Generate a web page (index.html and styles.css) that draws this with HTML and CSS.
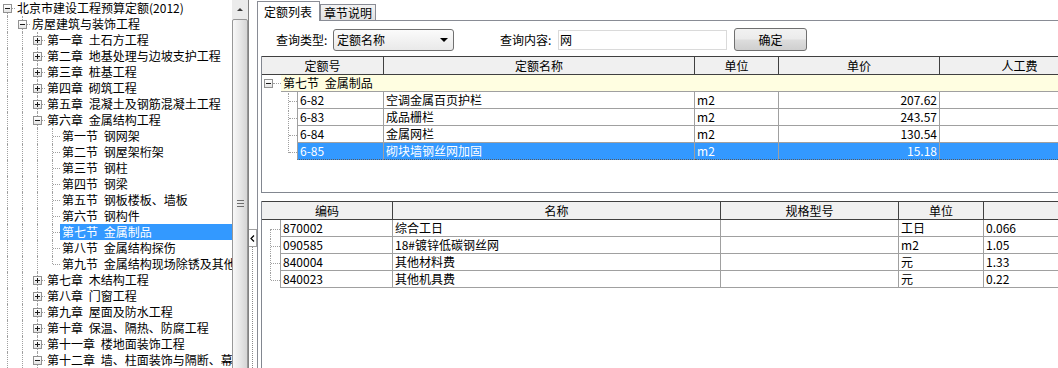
FILE: index.html
```html
<!DOCTYPE html>
<html lang="zh-CN">
<head>
    <meta charset="UTF-8">
    <title>定额查询</title>
    <link rel="stylesheet" href="styles.css">
</head>
<body>
<div class="app">
    <div class="tree-pane">
        <ul class="tree">
            <li class="node"><span class="g r"><i class="box minus"></i></span><span class="label">北京市建设工程预算定额(2012)</span></li>
            <li class="node"><span class="g v"></span><span class="g t"><i class="box minus"></i></span><span class="label">房屋建筑与装饰工程</span></li>
            <li class="node"><span class="g v"></span><span class="g v"></span><span class="g t"><i class="box plus"></i></span><span class="label">第一章 土石方工程</span></li>
            <li class="node"><span class="g v"></span><span class="g v"></span><span class="g t"><i class="box plus"></i></span><span class="label">第二章 地基处理与边坡支护工程</span></li>
            <li class="node"><span class="g v"></span><span class="g v"></span><span class="g t"><i class="box plus"></i></span><span class="label">第三章 桩基工程</span></li>
            <li class="node"><span class="g v"></span><span class="g v"></span><span class="g t"><i class="box plus"></i></span><span class="label">第四章 砌筑工程</span></li>
            <li class="node"><span class="g v"></span><span class="g v"></span><span class="g t"><i class="box plus"></i></span><span class="label">第五章 混凝土及钢筋混凝土工程</span></li>
            <li class="node"><span class="g v"></span><span class="g v"></span><span class="g t"><i class="box minus"></i></span><span class="label">第六章 金属结构工程</span></li>
            <li class="node"><span class="g v"></span><span class="g v"></span><span class="g v"></span><span class="g t"></span><span class="label">第一节 钢网架</span></li>
            <li class="node"><span class="g v"></span><span class="g v"></span><span class="g v"></span><span class="g t"></span><span class="label">第二节 钢屋架桁架</span></li>
            <li class="node"><span class="g v"></span><span class="g v"></span><span class="g v"></span><span class="g t"></span><span class="label">第三节 钢柱</span></li>
            <li class="node"><span class="g v"></span><span class="g v"></span><span class="g v"></span><span class="g t"></span><span class="label">第四节 钢梁</span></li>
            <li class="node"><span class="g v"></span><span class="g v"></span><span class="g v"></span><span class="g t"></span><span class="label">第五节 钢板楼板、墙板</span></li>
            <li class="node"><span class="g v"></span><span class="g v"></span><span class="g v"></span><span class="g t"></span><span class="label">第六节 钢构件</span></li>
            <li class="node selected"><span class="g v"></span><span class="g v"></span><span class="g v"></span><span class="g t"></span><span class="label">第七节 金属制品</span></li>
            <li class="node"><span class="g v"></span><span class="g v"></span><span class="g v"></span><span class="g t"></span><span class="label">第八节 金属结构探伤</span></li>
            <li class="node"><span class="g v"></span><span class="g v"></span><span class="g v"></span><span class="g l"></span><span class="label">第九节 金属结构现场除锈及其他</span></li>
            <li class="node"><span class="g v"></span><span class="g v"></span><span class="g t"><i class="box plus"></i></span><span class="label">第七章 木结构工程</span></li>
            <li class="node"><span class="g v"></span><span class="g v"></span><span class="g t"><i class="box plus"></i></span><span class="label">第八章 门窗工程</span></li>
            <li class="node"><span class="g v"></span><span class="g v"></span><span class="g t"><i class="box plus"></i></span><span class="label">第九章 屋面及防水工程</span></li>
            <li class="node"><span class="g v"></span><span class="g v"></span><span class="g t"><i class="box plus"></i></span><span class="label">第十章 保温、隔热、防腐工程</span></li>
            <li class="node"><span class="g v"></span><span class="g v"></span><span class="g t"><i class="box plus"></i></span><span class="label">第十一章 楼地面装饰工程</span></li>
            <li class="node"><span class="g v"></span><span class="g v"></span><span class="g t"><i class="box minus"></i></span><span class="label">第十二章 墙、柱面装饰与隔断、幕墙工程</span></li>
        </ul>
        <div class="vscroll">
            <div class="vscroll-up"></div>
            <div class="vscroll-thumb"><span class="grip"></span></div>
        </div>
    </div>

    <div class="splitter">
        <div class="splitter-btn">
            <svg width="5" height="7" viewBox="0 0 5 7"><path d="M4 0.5 L1 3.5 L4 6.5" stroke="#000" stroke-width="1.2" fill="none"/></svg>
        </div>
        <div class="splitter-dots"></div>
    </div>

    <div class="main">
        <div class="tabs">
            <div class="tab active">定额列表</div>
            <div class="tab">章节说明</div>
        </div>
        <div class="tab-body">
            <div class="query">
                <span class="q-label">查询类型:</span>
                <div class="combo"><span>定额名称</span><span class="combo-arrow"></span></div>
                <span class="q-label second">查询内容:</span>
                <div class="q-input">网</div>
                <div class="q-btn">确定</div>
            </div>

            <div class="grid grid-top">
                <table class="dg dg-top">
                    <colgroup>
                        <col class="c-g1"><col class="c-g2"><col class="c-code"><col class="c-name"><col class="c-unit"><col class="c-price"><col class="c-labor">
                    </colgroup>
                    <thead>
                        <tr><th colspan="3" class="first">定额号</th><th>定额名称</th><th>单位</th><th>单价</th><th>人工费</th></tr>
                    </thead>
                    <tbody>
                        <tr class="group">
                            <td class="gut"><span class="tl grp"><i class="box minus"></i></span></td>
                            <td colspan="6" class="group-cell">第七节 金属制品</td>
                        </tr>
                        <tr>
                            <td colspan="2" class="gut"><span class="tl t"></span></td>
                            <td class="code">6-82</td><td>空调金属百页护栏</td><td>m2</td><td class="num">207.62</td><td></td>
                        </tr>
                        <tr>
                            <td colspan="2" class="gut"><span class="tl t"></span></td>
                            <td class="code">6-83</td><td>成品栅栏</td><td>m2</td><td class="num">243.57</td><td></td>
                        </tr>
                        <tr>
                            <td colspan="2" class="gut"><span class="tl t"></span></td>
                            <td class="code">6-84</td><td>金属网栏</td><td>m2</td><td class="num">130.54</td><td></td>
                        </tr>
                        <tr class="sel">
                            <td colspan="2" class="gut"><span class="tl l"></span></td>
                            <td class="code">6-85</td><td>砌块墙钢丝网加固</td><td>m2</td><td class="num">15.18</td><td></td>
                        </tr>
                    </tbody>
                </table>
            </div>

            <div class="grid grid-bottom">
                <table class="dg dg-bottom">
                    <colgroup>
                        <col class="c-g"><col class="c-bcode"><col class="c-bname"><col class="c-spec"><col class="c-bunit"><col class="c-qty">
                    </colgroup>
                    <thead>
                        <tr><th colspan="2" class="first">编码</th><th>名称</th><th>规格型号</th><th>单位</th><th></th></tr>
                    </thead>
                    <tbody>
                        <tr><td class="gut"><span class="tl f"></span></td><td class="code">870002</td><td>综合工日</td><td></td><td>工日</td><td>0.066</td></tr>
                        <tr><td class="gut"><span class="tl t"></span></td><td class="code">090585</td><td>18#镀锌低碳钢丝网</td><td></td><td>m2</td><td>1.05</td></tr>
                        <tr><td class="gut"><span class="tl t"></span></td><td class="code">840004</td><td>其他材料费</td><td></td><td>元</td><td>1.33</td></tr>
                        <tr><td class="gut"><span class="tl l"></span></td><td class="code">840023</td><td>其他机具费</td><td></td><td>元</td><td>0.22</td></tr>
                    </tbody>
                </table>
            </div>
        </div>
    </div>
</div>
</body>
</html>
```

FILE: styles.css
```css
:root {
    --line: #a0a0a0;
    --dots: #a0a0a0;
    --frame: #828790;
    --head-line: #404040;
    --select: #3399ff;
    --tab-line: #898c95;
}

* {
    margin: 0;
    padding: 0;
    box-sizing: border-box;
}

body {
    font-family: "Noto Sans CJK SC", "Liberation Sans", sans-serif;
    font-size: 12px;
    color: #000;
    background: #fff;
    overflow: hidden;
}

.app {
    display: flex;
    width: 1058px;
    height: 368px;
}

/* Left tree */
.tree-pane {
    display: flex;
    width: 249px;
    flex-shrink: 0;
    border-right: 1px solid #828282;
}

.tree {
    list-style: none;
    width: 232px;
    overflow: hidden;
}

.node {
    display: flex;
    height: 16px;
    line-height: 16px;
    white-space: nowrap;
}

.g {
    position: relative;
    width: 15px;
    height: 16px;
    flex-shrink: 0;
}

.g::before,
.g::after,
.tl::before,
.tl::after {
    content: "";
    position: absolute;
}

.g.v::before,
.g.t::before {
    left: 7px;
    top: 0;
    bottom: 0;
    border-left: 1px dotted var(--dots);
}

.g.l::before {
    left: 7px;
    top: 0;
    height: 8px;
    border-left: 1px dotted var(--dots);
}

.g.r::before {
    left: 7px;
    top: 8px;
    bottom: 0;
    border-left: 1px dotted var(--dots);
}

.g.t::after,
.g.l::after,
.g.r::after {
    left: 8px;
    right: 0;
    top: 8px;
    border-top: 1px dotted var(--dots);
}

.box {
    position: absolute;
    left: 3px;
    top: 4px;
    width: 9px;
    height: 9px;
    border: 1px solid #919191;
    background: linear-gradient(#ffffff, #e4e4e4);
    z-index: 1;
}

.box::before {
    content: "";
    position: absolute;
    left: 1px;
    top: 3px;
    width: 5px;
    height: 1px;
    background: #1a1a1a;
}

.box.plus::after {
    content: "";
    position: absolute;
    left: 3px;
    top: 1px;
    width: 1px;
    height: 5px;
    background: #1a1a1a;
}

.label {
    padding: 0 2px;
    word-spacing: 3px;
}

.node.selected .label {
    flex: 1;
    background: var(--select);
    color: #fff;
}

/* Scrollbar */
.vscroll {
    width: 16px;
    flex-shrink: 0;
    background: #ebebeb;
    display: flex;
    flex-direction: column;
    overflow: hidden;
}

.vscroll-up {
    height: 18px;
    flex-shrink: 0;
    display: flex;
    justify-content: center;
    align-items: center;
}

.vscroll-up::before {
    content: "";
    border-left: 3px solid transparent;
    border-right: 3px solid transparent;
    border-bottom: 3px solid #3c3c3c;
}

.vscroll-thumb {
    height: 370px;
    flex-shrink: 0;
    margin-top: 1px;
    border: 1px solid #979797;
    border-radius: 2px;
    background: linear-gradient(90deg, #f8f8f8, #e6e6e6 55%, #d5d5d5);
    display: flex;
    justify-content: center;
    align-items: center;
}

.grip {
    width: 7px;
    height: 8px;
    background: repeating-linear-gradient(#6e6e6e 0 1px, transparent 1px 3px);
}

/* Splitter */
.splitter {
    width: 8px;
    flex-shrink: 0;
    display: flex;
    flex-direction: column;
}

.splitter-btn {
    margin-top: 229px;
    height: 18px;
    border: 1px solid var(--line);
    border-left: 0;
    display: flex;
    justify-content: center;
    align-items: center;
}

.splitter-dots {
    flex: 1;
    margin-left: 3px;
    border-left: 1px dotted #8a8a8a;
}

/* Main area */
.main {
    flex: 1;
    display: flex;
    flex-direction: column;
    overflow: hidden;
}

.tabs {
    display: flex;
    align-items: flex-end;
    height: 21px;
    flex-shrink: 0;
    border-bottom: 1px solid var(--tab-line);
}

.tab {
    height: 16px;
    padding: 0 3px;
    line-height: 15px;
    border: 1px solid var(--tab-line);
    border-bottom: 0;
    background: linear-gradient(#f4f4f4, #e1e1e1);
}

.tab.active {
    height: 20px;
    padding: 0 7px 0 6px;
    line-height: 19px;
    margin-bottom: -1px;
    background: #fff;
}

.tab-body {
    flex: 1;
    display: flex;
    flex-direction: column;
    border-left: 1px solid var(--tab-line);
    padding-left: 3px;
    min-height: 0;
}

.query {
    display: flex;
    align-items: center;
    height: 23px;
    margin: 7px 0 5px;
    flex-shrink: 0;
}

.q-label {
    width: 57px;
    margin-left: 15px;
}

.q-label.second {
    width: 58px;
    margin-left: 46px;
}

.combo {
    width: 121px;
    height: 22px;
    padding: 0 5px 0 3px;
    border: 1px solid #707070;
    border-radius: 3px;
    background: linear-gradient(#fbfbfb, #e9e9e9);
    display: flex;
    align-items: center;
    justify-content: space-between;
}

.combo-arrow {
    border-left: 4px solid transparent;
    border-right: 4px solid transparent;
    border-top: 4px solid #000;
}

.q-input {
    width: 169px;
    height: 20px;
    line-height: 18px;
    padding-left: 1px;
    border: 1px solid #dadada;
    background: #fff;
}

.q-btn {
    width: 73px;
    height: 23px;
    margin-left: 7px;
    line-height: 21px;
    text-align: center;
    border: 1px solid #707070;
    border-radius: 3px;
    background: linear-gradient(#f2f2f2 0%, #ebebeb 48%, #dddddd 52%, #cfcfcf 100%);
}

/* Data grids */
.grid {
    border-left: 1px solid var(--frame);
    overflow: hidden;
    flex-shrink: 0;
}

.grid-top {
    height: 137px;
    border-bottom: 1px solid var(--frame);
    margin-bottom: 8px;
}

.grid-bottom {
    flex: 1;
}

.dg {
    border-collapse: separate;
    border-spacing: 0;
    table-layout: fixed;
}

.dg-top { width: 838px; }
.dg-bottom { width: 839px; }

.c-g1 { width: 19px; }
.c-g2 { width: 16px; }
.c-code { width: 87px; }
.c-name { width: 311px; }
.c-unit { width: 84px; }
.c-price { width: 161px; }
.c-labor { width: 160px; }

.c-g { width: 18px; }
.c-bcode { width: 113px; }
.c-bname { width: 328px; }
.c-spec { width: 178px; }
.c-bunit { width: 85px; }
.c-qty { width: 117px; }

.dg th {
    height: 19px;
    padding: 0;
    font-weight: normal;
    text-align: center;
    line-height: 17px;
    background: #f0f0f0;
    border-top: 1px solid var(--head-line);
    border-right: 1px solid var(--head-line);
    border-bottom: 1px solid var(--head-line);
}

.dg td {
    height: 17px;
    padding: 0 2px;
    line-height: 16px;
    white-space: nowrap;
    overflow: hidden;
    border-right: 1px solid var(--line);
    border-bottom: 1px solid var(--line);
}

.dg td.code {
    border-left: 1px solid var(--line);
}

.dg td.num {
    text-align: right;
}

.dg td.gut {
    padding: 0;
    border: 0;
}

.group-cell {
    background: #fffee1;
    padding-left: 1px;
    word-spacing: 3px;
}

.dg tr.sel td:not(.gut) {
    background: var(--select);
    color: #fff;
    border-bottom: 1px dotted #5a5a5a;
}

/* Tree lines inside grids */
.tl {
    display: block;
    position: relative;
    height: 16px;
}

.tl.t::before,
.tl.l::before,
.tl.f::before {
    left: 26px;
    border-left: 1px dotted var(--dots);
}

.tl.t::before { top: 0; bottom: 0; }
.tl.l::before { top: 0; height: 9px; }
.tl.f::before { top: 8px; bottom: 0; }

.tl.t::after,
.tl.l::after,
.tl.f::after {
    left: 27px;
    right: 0;
    top: 8px;
    border-top: 1px dotted var(--dots);
}

.dg-bottom .tl::before { left: 8px; }
.dg-bottom .tl::after { left: 9px; }
.dg-bottom .tl.l::before { height: 8px; }
.dg-bottom tr:last-child td.gut .tl::before { bottom: auto; }

.tl.grp .box {
    left: 2px;
    top: 3px;
}

.tl.grp::after {
    left: 11px;
    right: 0;
    top: 7px;
    border-top: 1px dotted var(--dots);
}
```
